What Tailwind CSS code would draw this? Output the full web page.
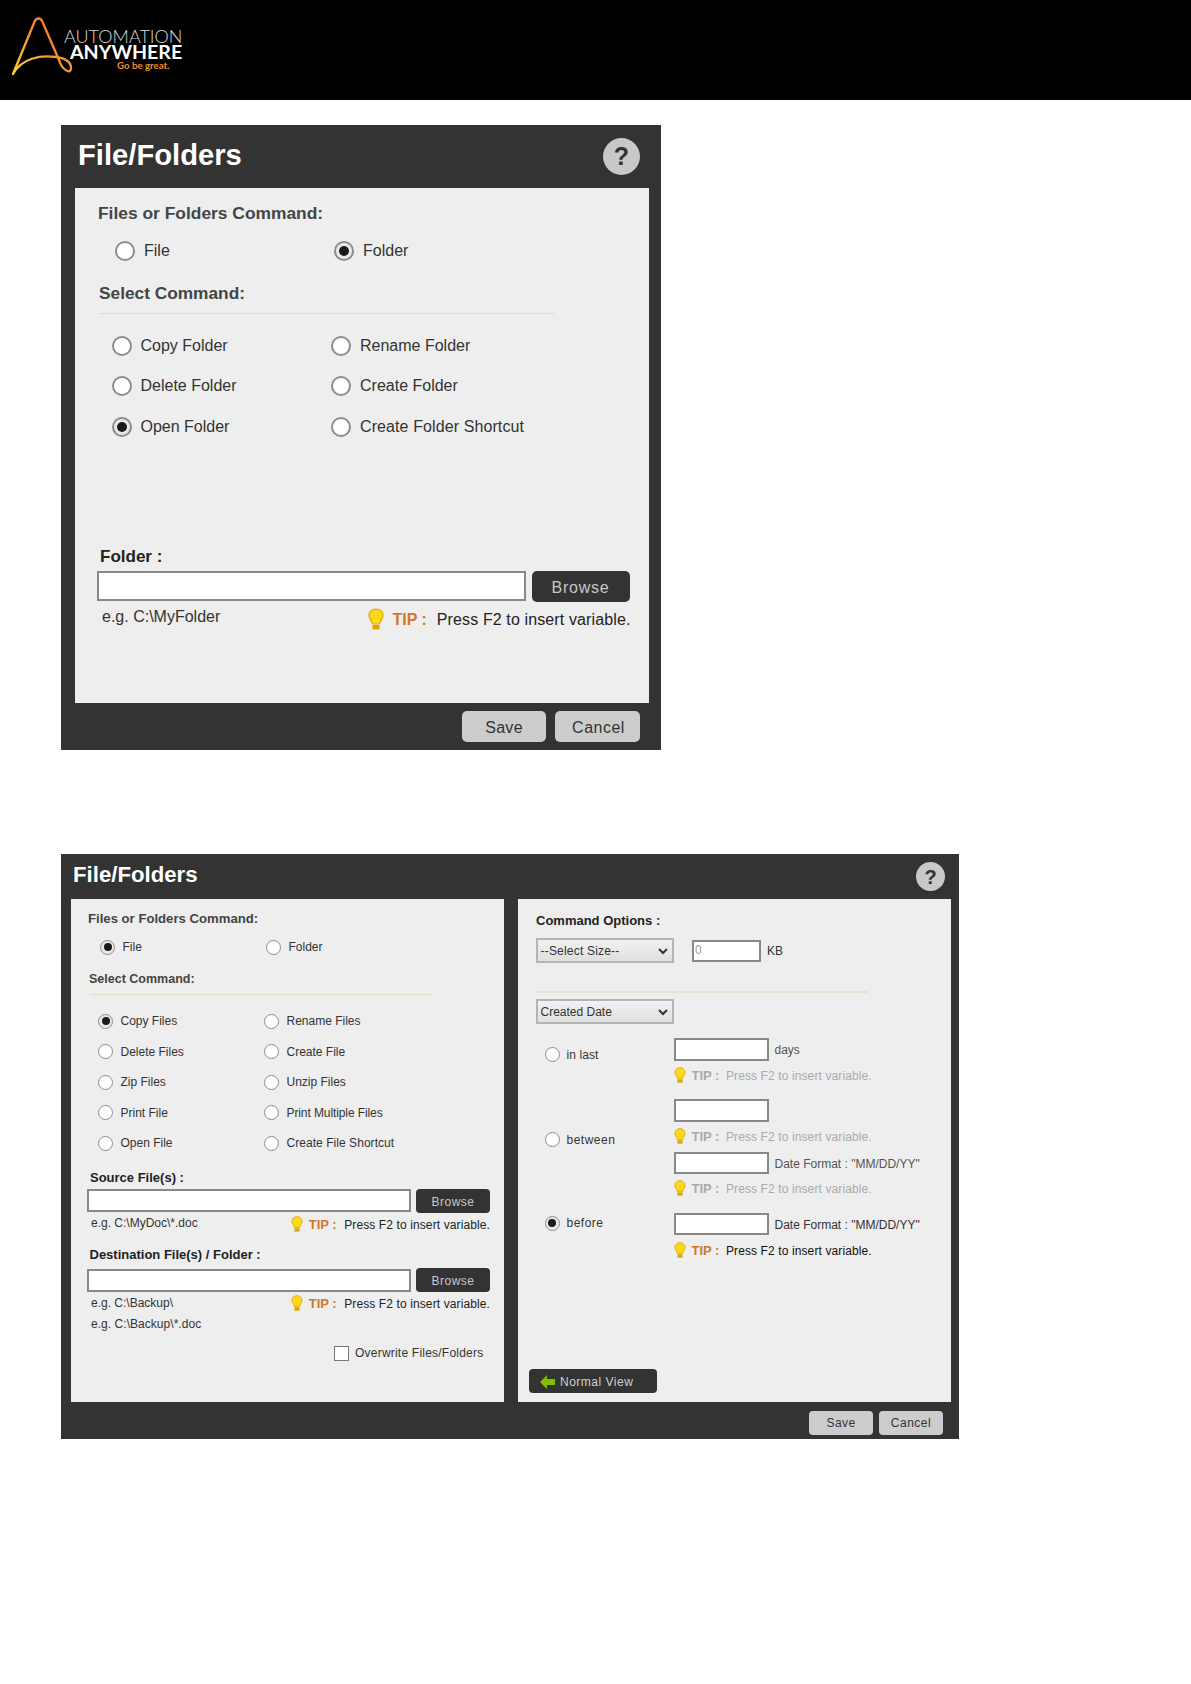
<!DOCTYPE html>
<html>
<head>
<meta charset="utf-8">
<script src="https://cdn.jsdelivr.net/npm/@tailwindcss/browser@4"></script>
</head>
<body class="bg-white font-['Liberation_Sans',Arial,sans-serif]">
<div class="w-[1191px] h-[1684px] overflow-hidden flex flex-col">

  <!-- Header -->
  <header class="h-[100px] bg-black flex shrink-0">
    <div class="relative w-[200px] h-[100px]">
      <svg class="absolute left-0 top-0" width="80" height="100" viewBox="0 0 80 100" fill="none">
        <defs><linearGradient id="g" x1="0" y1="1" x2="1" y2="0"><stop offset="0" stop-color="#ffd22e"/><stop offset="0.6" stop-color="#f58a2c"/><stop offset="1" stop-color="#ee6a35"/></linearGradient></defs>
        <path d="M13 74 L34 23 C36 17 41 17 43 23 L59 60 C62 70 71 75 71 68 C71 61 63 58 56 57 C40 55 22 58 13 74" stroke="url(#g)" stroke-width="2.300" stroke-linecap="round" stroke-linejoin="round"/>
      </svg>
      <div class="absolute left-[64px] top-[29px] text-[18px] leading-[14px] text-[#d8d8d8] font-['Lato',sans-serif] font-light whitespace-nowrap">AUTOMATION</div>
      <div class="absolute left-[70px] top-[45px] text-[19.600px] leading-[14px] text-white font-['Lato',sans-serif] font-bold whitespace-nowrap">ANYWHERE</div>
      <div class="absolute left-[117px] top-[60px] text-[9.700px] leading-[11px] text-[#f0902a] font-['Lato',sans-serif] font-bold whitespace-nowrap">Go be great.</div>
    </div>
  </header>

  <!-- Dialog 1 -->
  <section class="ml-[61px] mt-[25px] w-[600px] h-[625px] bg-[#333333] flex flex-col shrink-0">
    <div class="h-[63px] flex items-center justify-between pl-[17px] pr-[21px]">
      <h2 class="mb-[2px] text-[29.200px] font-bold text-white leading-none">File/Folders</h2>
      <div class="w-[37px] h-[37px] rounded-full bg-[#c8c8c8] flex items-center justify-center text-[#333] text-[25px] font-bold">?</div>
    </div>
    <div class="ml-[14px] w-[574px] h-[515px] bg-[#eeeeee] flex flex-col text-[16px] text-[#333]">
      <div class="mt-[13px] h-[24px] pl-[23px] flex items-center text-[17.400px] font-bold text-[#444]">Files or Folders Command:</div>
      <div class="mt-[11px] h-[30px] pl-[40px] flex items-center">
        <div class="w-[219px] flex items-center gap-[9px]"><span class="w-[20px] h-[20px] rounded-full border-2 border-[#8c8c8c] bg-white"></span><span>File</span></div>
        <div class="flex items-center gap-[9px]"><span class="w-[20px] h-[20px] rounded-full border-2 border-[#8c8c8c] bg-[#e8e8e8] flex items-center justify-center"><span class="w-[10px] h-[10px] rounded-full bg-[#1a1a1a]"></span></span><span>Folder</span></div>
      </div>
      <div class="mt-[15px] h-[24px] pl-[24px] pt-[2px] flex items-center text-[17.300px] font-bold text-[#444]">Select Command:</div>
      <div class="mt-[8px] ml-[25px] w-[454px] h-[1px] bg-[#dcdcc8]"></div>
      <div class="mt-[11.500px] pl-[36.500px] grid grid-cols-[219.500px_1fr] auto-rows-[40.500px] items-center">
        <div class="flex items-center gap-[9px]"><span class="w-[20px] h-[20px] rounded-full border-2 border-[#8c8c8c] bg-white"></span><span>Copy Folder</span></div>
        <div class="flex items-center gap-[9px]"><span class="w-[20px] h-[20px] rounded-full border-2 border-[#8c8c8c] bg-white"></span><span>Rename Folder</span></div>
        <div class="flex items-center gap-[9px]"><span class="w-[20px] h-[20px] rounded-full border-2 border-[#8c8c8c] bg-white"></span><span>Delete Folder</span></div>
        <div class="flex items-center gap-[9px]"><span class="w-[20px] h-[20px] rounded-full border-2 border-[#8c8c8c] bg-white"></span><span>Create Folder</span></div>
        <div class="flex items-center gap-[9px]"><span class="w-[20px] h-[20px] rounded-full border-2 border-[#8c8c8c] bg-[#e8e8e8] flex items-center justify-center"><span class="w-[10px] h-[10px] rounded-full bg-[#1a1a1a]"></span></span><span>Open Folder</span></div>
        <div class="flex items-center gap-[9px]"><span class="w-[20px] h-[20px] rounded-full border-2 border-[#8c8c8c] bg-white"></span><span class="tracking-[0.1px]">Create Folder Shortcut</span></div>
      </div>
      <div class="mt-[97px] h-[24px] pl-[25px] pt-[2px] flex items-center text-[17px] font-bold text-[#222]">Folder :</div>
      <div class="mt-[3px] ml-[22px] flex items-start gap-[5.500px]">
        <div class="w-[429px] h-[30px] bg-white border-2 border-[#888]"></div>
        <div class="w-[98px] h-[31px] bg-[#333] rounded-[5px] flex items-center justify-center pt-[2px] text-[#c8c8c8] tracking-[0.8px]">Browse</div>
      </div>
      <div class="mt-[3px] h-[28px] pl-[27px] pr-[18.500px] flex items-center justify-between">
        <span class="mb-[4px]">e.g. C:\MyFolder</span>
        <div class="flex items-center pt-[2px]">
          <svg class="mb-[3px]" width="16" height="22" viewBox="0 0 16 22"><path d="M8 1C3.800 1 1 4 1 7.500C1 10.500 3.500 12 4.500 16H11.500C12.500 12 15 10.500 15 7.500C15 4 12.200 1 8 1Z" fill="#ffd81a" stroke="#dca800" stroke-width="1.200"/><rect x="4.500" y="17" width="7" height="4.500" fill="#dca800"/></svg>
          <span class="ml-[8px] font-bold text-[#d2772a]">TIP :</span>
          <span class="ml-[10px] text-[#222] tracking-[0.12px]">Press F2 to insert variable.</span>
        </div>
      </div>
    </div>
    <div class="h-[47px] pt-[8px] pr-[21px] flex justify-end items-start gap-[9px]">
      <div class="w-[84px] h-[31px] pt-[2px] bg-[#cccccc] rounded-[5px] flex items-center justify-center text-[16px] text-[#333] tracking-[0.3px]">Save</div>
      <div class="w-[85px] h-[31px] pt-[2px] pl-[2px] bg-[#cccccc] rounded-[5px] flex items-center justify-center text-[16px] text-[#333] tracking-[0.5px]">Cancel</div>
    </div>
  </section>

  <!-- Dialog 2 -->
  <section class="ml-[61px] mt-[104px] w-[898px] h-[585px] bg-[#333333] flex flex-col shrink-0">
    <div class="h-[45px] flex items-center justify-between pl-[12px] pr-[14px]">
      <h2 class="mb-[2px] text-[22.200px] font-bold text-white leading-none">File/Folders</h2>
      <div class="w-[29px] h-[29px] rounded-full bg-[#c8c8c8] flex items-center justify-center text-[#333] text-[20px] font-bold">?</div>
    </div>
    <div class="ml-[10px] flex gap-[14px] h-[503px] text-[12px] text-[#333]">
      <!-- Left panel -->
      <div class="w-[433px] bg-[#eeeeee] flex flex-col">
        <div class="mt-[11px] h-[18px] pl-[17px] flex items-center text-[13.150px] font-bold text-[#444]">Files or Folders Command:</div>
        <div class="mt-[9px] h-[20px] pl-[29px] flex items-center">
          <div class="w-[166px] flex items-center gap-[7.500px]"><span class="w-[15px] h-[15px] rounded-full border-[1.500px] border-[#8c8c8c] bg-[#e8e8e8] flex items-center justify-center"><span class="w-[8px] h-[8px] rounded-full bg-[#1a1a1a]"></span></span><span>File</span></div>
          <div class="flex items-center gap-[7.500px]"><span class="w-[15px] h-[15px] rounded-full border-[1.500px] border-[#8c8c8c] bg-white"></span><span>Folder</span></div>
        </div>
        <div class="mt-[13px] h-[18px] pl-[18px] flex items-center text-[12.500px] font-bold text-[#444]">Select Command:</div>
        <div class="mt-[6px] ml-[19px] w-[343px] h-[1px] bg-[#dcdcc8]"></div>
        <div class="mt-[11px] pl-[27px] grid grid-cols-[166px_1fr] auto-rows-[30.500px] items-center">
          <div class="flex items-center gap-[7.500px]"><span class="w-[15px] h-[15px] rounded-full border-[1.500px] border-[#8c8c8c] bg-[#e8e8e8] flex items-center justify-center"><span class="w-[8px] h-[8px] rounded-full bg-[#1a1a1a]"></span></span><span>Copy Files</span></div>
          <div class="flex items-center gap-[7.500px]"><span class="w-[15px] h-[15px] rounded-full border-[1.500px] border-[#8c8c8c] bg-white"></span><span>Rename Files</span></div>
          <div class="flex items-center gap-[7.500px]"><span class="w-[15px] h-[15px] rounded-full border-[1.500px] border-[#8c8c8c] bg-white"></span><span>Delete Files</span></div>
          <div class="flex items-center gap-[7.500px]"><span class="w-[15px] h-[15px] rounded-full border-[1.500px] border-[#8c8c8c] bg-white"></span><span>Create File</span></div>
          <div class="flex items-center gap-[7.500px]"><span class="w-[15px] h-[15px] rounded-full border-[1.500px] border-[#8c8c8c] bg-white"></span><span>Zip Files</span></div>
          <div class="flex items-center gap-[7.500px]"><span class="w-[15px] h-[15px] rounded-full border-[1.500px] border-[#8c8c8c] bg-white"></span><span>Unzip Files</span></div>
          <div class="flex items-center gap-[7.500px]"><span class="w-[15px] h-[15px] rounded-full border-[1.500px] border-[#8c8c8c] bg-white"></span><span>Print File</span></div>
          <div class="flex items-center gap-[7.500px]"><span class="w-[15px] h-[15px] rounded-full border-[1.500px] border-[#8c8c8c] bg-white"></span><span class="tracking-[-0.1px]">Print Multiple Files</span></div>
          <div class="flex items-center gap-[7.500px]"><span class="w-[15px] h-[15px] rounded-full border-[1.500px] border-[#8c8c8c] bg-white"></span><span>Open File</span></div>
          <div class="flex items-center gap-[7.500px]"><span class="w-[15px] h-[15px] rounded-full border-[1.500px] border-[#8c8c8c] bg-white"></span><span class="tracking-[0.05px]">Create File Shortcut</span></div>
        </div>
        <div class="mt-[11.500px] h-[16px] pl-[19px] flex items-center text-[13px] font-bold text-[#222]">Source File(s) :</div>
        <div class="mt-[3px] ml-[16px] flex items-start gap-[5px]">
          <div class="w-[324px] h-[23px] bg-white border-2 border-[#888]"></div>
          <div class="w-[74px] h-[24px] pt-[1px] bg-[#333] rounded-[4px] flex items-center justify-center text-[#c8c8c8] tracking-[0.5px]">Browse</div>
        </div>
        <div class="mt-[1px] h-[22px] pl-[20px] pr-[14px] flex items-center justify-between">
          <span class="mb-[4px]">e.g. C:\MyDoc\*.doc</span>
          <div class="flex items-center">
            <svg class="mb-[3px]" width="12" height="16" viewBox="0 0 16 22"><path d="M8 1C3.800 1 1 4 1 7.500C1 10.500 3.500 12 4.500 16H11.500C12.500 12 15 10.500 15 7.500C15 4 12.200 1 8 1Z" fill="#ffd81a" stroke="#dca800" stroke-width="1.200"/><rect x="4.500" y="17" width="7" height="4.500" fill="#dca800"/></svg>
            <span class="ml-[6px] text-[13px] font-bold text-[#d2772a]">TIP :</span>
            <span class="ml-[7.500px] text-[#222] tracking-[0.11px]">Press F2 to insert variable.</span>
          </div>
        </div>
        <div class="mt-[11px] h-[16px] pl-[18.500px] flex items-center text-[13px] font-bold text-[#222]">Destination File(s) / Folder :</div>
        <div class="mt-[5px] ml-[16px] flex items-start gap-[5px]">
          <div class="mt-[1px] w-[324px] h-[23px] bg-white border-2 border-[#888]"></div>
          <div class="w-[74px] h-[24px] pt-[1px] bg-[#333] rounded-[4px] flex items-center justify-center text-[#c8c8c8] tracking-[0.5px]">Browse</div>
        </div>
        <div class="mt-[1px] h-[22px] pl-[20px] pr-[14px] flex items-center justify-between">
          <span class="mb-[3px]">e.g. C:\Backup\</span>
          <div class="flex items-center">
            <svg class="mb-[3px]" width="12" height="16" viewBox="0 0 16 22"><path d="M8 1C3.800 1 1 4 1 7.500C1 10.500 3.500 12 4.500 16H11.500C12.500 12 15 10.500 15 7.500C15 4 12.200 1 8 1Z" fill="#ffd81a" stroke="#dca800" stroke-width="1.200"/><rect x="4.500" y="17" width="7" height="4.500" fill="#dca800"/></svg>
            <span class="ml-[6px] text-[13px] font-bold text-[#d2772a]">TIP :</span>
            <span class="ml-[7.500px] text-[#222] tracking-[0.11px]">Press F2 to insert variable.</span>
          </div>
        </div>
        <div class="mt-[1px] h-[16px] pl-[20px] flex items-center tracking-[0.04px]">e.g. C:\Backup\*.doc</div>
        <div class="mt-[13px] h-[16px] ml-[263px] flex items-center gap-[6px]">
          <span class="w-[15px] h-[15px] border-[1.500px] border-[#777] bg-white"></span><span class="tracking-[0.22px]">Overwrite Files/Folders</span>
        </div>
      </div>
      <!-- Right panel -->
      <div class="w-[433px] bg-[#eeeeee] flex flex-col">
        <div class="mt-[14px] h-[16px] pl-[18px] flex items-center text-[13px] font-bold text-[#222]">Command Options :</div>
        <div class="mt-[9px] ml-[18px] flex items-center h-[25px]">
          <div class="w-[138px] h-[25px] border-2 border-[#b4b4b4] bg-gradient-to-b from-[#f2f2f2] to-[#dfdfdf] flex items-center justify-between pl-[2.500px] pr-[4px]"><span class="tracking-[0.2px]">--Select Size--</span><svg width="10" height="8" viewBox="0 0 10 8"><path d="M1 2L5 6L9 2" fill="none" stroke="#333" stroke-width="2"/></svg></div>
          <div class="ml-[18px] w-[69px] h-[22px] bg-white border-2 border-[#888] pl-[1px] text-[#999] leading-[16px]">0</div>
          <span class="ml-[6px]">KB</span>
        </div>
        <div class="mt-[28px] ml-[17px] w-[333px] h-[2px] bg-[#e4e4d4]"></div>
        <div class="mt-[6px] ml-[18px] w-[138px] h-[25px] border-2 border-[#b4b4b4] bg-gradient-to-b from-[#f2f2f2] to-[#dfdfdf] flex items-center justify-between pl-[2.500px] pr-[4px]"><span>Created Date</span><svg width="10" height="8" viewBox="0 0 10 8"><path d="M1 2L5 6L9 2" fill="none" stroke="#333" stroke-width="2"/></svg></div>

        <!-- in last -->
        <div class="mt-[14px] flex">
          <div class="w-[155.500px] pl-[26.500px] pt-[6px]">
            <div class="flex items-center gap-[7px] h-[20px]"><span class="w-[15px] h-[15px] rounded-full border-[1.500px] border-[#8c8c8c] bg-white"></span><span class="pt-[1px] tracking-[0.1px]">in last</span></div>
          </div>
          <div class="flex flex-col">
            <div class="flex items-center gap-[6px]"><div class="w-[95px] h-[23px] bg-white border-2 border-[#888]"></div><span class="text-[#555] pt-[1px]">days</span></div>
            <div class="mt-[4px] h-[22px] flex items-center text-[#aaa]">
              <svg class="mb-[3px]" width="12" height="16" viewBox="0 0 16 22"><path d="M8 1C3.800 1 1 4 1 7.500C1 10.500 3.500 12 4.500 16H11.500C12.500 12 15 10.500 15 7.500C15 4 12.200 1 8 1Z" fill="#ffd81a" stroke="#dca800" stroke-width="1.200"/><rect x="4.500" y="17" width="7" height="4.500" fill="#dca800"/></svg>
              <span class="ml-[6px] text-[13px] font-bold">TIP :</span><span class="ml-[6.500px] tracking-[0.11px]">Press F2 to insert variable.</span>
            </div>
          </div>
        </div>

        <!-- between -->
        <div class="mt-[12px] flex">
          <div class="w-[155.500px] pl-[26.500px] pt-[30px]">
            <div class="flex items-center gap-[7px] h-[20px]"><span class="w-[15px] h-[15px] rounded-full border-[1.500px] border-[#8c8c8c] bg-white"></span><span class="pt-[1px] tracking-[0.5px]">between</span></div>
          </div>
          <div class="flex flex-col">
            <div class="w-[95px] h-[23px] bg-white border-2 border-[#888]"></div>
            <div class="mt-[4px] h-[22px] flex items-center text-[#aaa]">
              <svg class="mb-[3px]" width="12" height="16" viewBox="0 0 16 22"><path d="M8 1C3.800 1 1 4 1 7.500C1 10.500 3.500 12 4.500 16H11.500C12.500 12 15 10.500 15 7.500C15 4 12.200 1 8 1Z" fill="#ffd81a" stroke="#dca800" stroke-width="1.200"/><rect x="4.500" y="17" width="7" height="4.500" fill="#dca800"/></svg>
              <span class="ml-[6px] text-[13px] font-bold">TIP :</span><span class="ml-[6.500px] tracking-[0.11px]">Press F2 to insert variable.</span>
            </div>
            <div class="mt-[4px] flex items-center gap-[6px]"><div class="w-[95px] h-[22px] bg-white border-2 border-[#888]"></div><span class="pt-[1px] text-[#555]">Date Format : "MM/DD/YY"</span></div>
            <div class="mt-[4px] h-[22px] flex items-center text-[#aaa]">
              <svg class="mb-[3px]" width="12" height="16" viewBox="0 0 16 22"><path d="M8 1C3.800 1 1 4 1 7.500C1 10.500 3.500 12 4.500 16H11.500C12.500 12 15 10.500 15 7.500C15 4 12.200 1 8 1Z" fill="#ffd81a" stroke="#dca800" stroke-width="1.200"/><rect x="4.500" y="17" width="7" height="4.500" fill="#dca800"/></svg>
              <span class="ml-[6px] text-[13px] font-bold">TIP :</span><span class="ml-[6.500px] tracking-[0.11px]">Press F2 to insert variable.</span>
            </div>
          </div>
        </div>

        <!-- before -->
        <div class="mt-[13px] flex">
          <div class="w-[155.500px] pl-[26.500px]">
            <div class="flex items-center gap-[7px] h-[20px]"><span class="w-[15px] h-[15px] rounded-full border-[1.500px] border-[#8c8c8c] bg-[#e8e8e8] flex items-center justify-center"><span class="w-[8px] h-[8px] rounded-full bg-[#1a1a1a]"></span></span><span class="tracking-[0.5px]">before</span></div>
          </div>
          <div class="flex flex-col">
            <div class="flex items-center gap-[6px]"><div class="w-[95px] h-[22px] bg-white border-2 border-[#888]"></div><span class="pt-[1px]">Date Format : "MM/DD/YY"</span></div>
            <div class="mt-[5px] h-[22px] flex items-center">
              <svg class="mb-[3px]" width="12" height="16" viewBox="0 0 16 22"><path d="M8 1C3.800 1 1 4 1 7.500C1 10.500 3.500 12 4.500 16H11.500C12.500 12 15 10.500 15 7.500C15 4 12.200 1 8 1Z" fill="#ffd81a" stroke="#dca800" stroke-width="1.200"/><rect x="4.500" y="17" width="7" height="4.500" fill="#dca800"/></svg>
              <span class="ml-[6px] text-[13px] font-bold text-[#d2772a]">TIP :</span><span class="ml-[6.500px] text-[#111] tracking-[0.11px]">Press F2 to insert variable.</span>
            </div>
          </div>
        </div>

        <div class="mt-auto mb-[9px] ml-[11px] w-[128px] h-[24px] pt-[1px] bg-[#333] rounded-[4px] flex items-center pl-[11px] text-[#d0d0d0] tracking-[0.5px]">
          <svg width="15" height="14" viewBox="0 0 15 14"><path d="M0 7L7 0V4H15V10H7V14Z" fill="#7fbf00"/></svg>
          <span class="ml-[5px]">Normal View</span>
        </div>
      </div>
    </div>
    <div class="h-[37px] pt-[9px] pr-[16px] flex justify-end items-start gap-[6px] text-[12px]">
      <div class="w-[64px] h-[24px] bg-[#cccccc] rounded-[4px] flex items-center justify-center text-[#333] tracking-[0.4px]">Save</div>
      <div class="w-[64px] h-[24px] bg-[#cccccc] rounded-[4px] flex items-center justify-center text-[#333] tracking-[0.5px]">Cancel</div>
    </div>
  </section>
</div>
</body>
</html>
